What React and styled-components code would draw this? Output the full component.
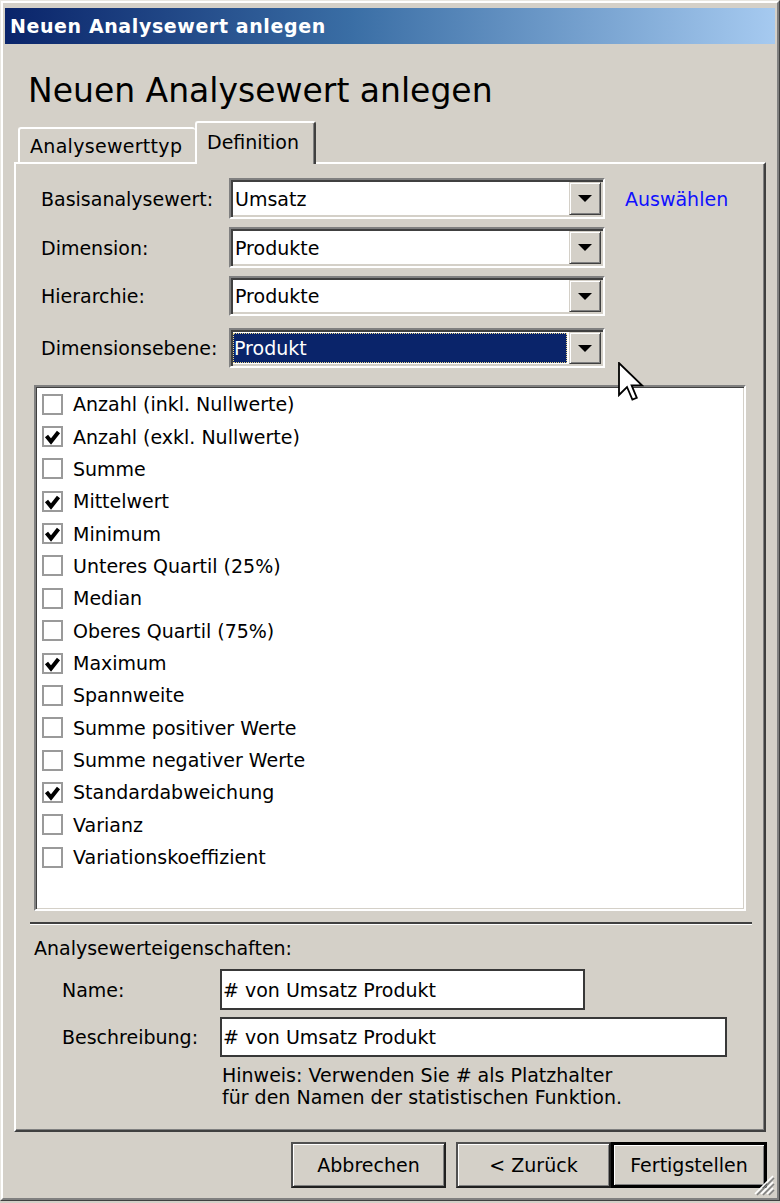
import React from "react";
import styled, { createGlobalStyle } from "styled-components";

const GlobalStyle = createGlobalStyle`
  html, body { margin: 0; padding: 0; background: #d4d0c8; }
  body {
    font-family: "DejaVu Sans", Verdana, sans-serif;
    font-size: 19px;
    color: #000;
  }
  * { box-sizing: border-box; }
`;

const Outer = styled.div`
  position: relative;
  width: 780px;
  height: 1201px;
  border: 1px solid;
  border-color: #e8e6e0 #404040 #404040 #e8e6e0;
  background: #d4d0c8;
`;

const Inner = styled.div`
  position: relative;
  height: 100%;
  border: 2px solid;
  border-color: #fff #808080 #808080 #fff;
  padding: 5px 2px 0 2px;
  display: flex;
  flex-direction: column;
`;

const TitleBar = styled.div`
  height: 36px;
  display: flex;
  align-items: center;
  padding-left: 5px;
  background: linear-gradient(to right, #0a246a 0%, #3a6ea5 45%, #a6caf0 100%);
  color: #fff;
  font-weight: bold;
  font-size: 19px;
  letter-spacing: 0.6px;
`;

const Header = styled.h1`
  margin: 30px 0 0 23px;
  font-size: 33px;
  line-height: 33px;
  font-weight: normal;
`;

const TabStrip = styled.div`
  position: relative;
  z-index: 1;
  margin-top: 14px;
  height: 41px;
  padding-left: 13px;
  display: flex;
  align-items: flex-end;
`;

const Tab = styled.div`
  display: flex;
  align-items: center;
  background: #d4d0c8;
  border-top: 2px solid #fff;
  border-left: 2px solid #fff;
  border-radius: 3px 3px 0 0;
  ${(p) =>
    p.$active
      ? `
    width: 121px;
    height: 43px;
    margin-bottom: -2px;
    padding: 0 0 4px 10px;
    border-right: 2px solid #404040;
    box-shadow: inset -1px 0 0 #808080;
  `
      : `
    width: 177px;
    height: 35px;
    padding: 0 0 0 10px;
    letter-spacing: 0.3px;
  `}
`;

const Panel = styled.div`
  margin: 0 9px;
  height: 970px;
  border: 2px solid;
  border-color: #fff #404040 #404040 #fff;
  box-shadow: inset -1px -1px 0 #808080;
  padding: 14px 18px 0 18px;
  display: flex;
  flex-direction: column;
`;

const FieldRow = styled.div`
  display: flex;
  align-items: center;
  height: ${(p) => p.$h || 41}px;
  margin-top: ${(p) => p.$gap || 0}px;
  padding-left: 7px;
`;

const FieldLabel = styled.div`
  width: 188px;
`;

const Combo = styled.div`
  width: 376px;
  height: 100%;
  display: flex;
  border: 2px solid;
  border-color: #808080 #fff #fff #808080;
  box-shadow: inset 2px 2px 0 #404040, inset -2px -2px 0 #d4d0c8;
  padding: 2px;
  background: #fff;
`;

const ComboValue = styled.div`
  flex: 1;
  display: flex;
  align-items: center;
  padding-left: 2px;
  ${(p) =>
    p.$selected &&
    `
    margin: 1px 2px 1px 0;
    padding-left: 1px;
    background: #0a246a;
    color: #fff;
    outline: 1px dotted #e6d38a;
    outline-offset: -1px;
  `}
`;

const ComboButton = styled.div`
  width: 32px;
  height: 100%;
  display: flex;
  align-items: center;
  justify-content: center;
  background: #d4d0c8;
  border: 1px solid;
  border-color: #d4d0c8 #404040 #404040 #d4d0c8;
  box-shadow: inset 1px 1px 0 #fff, inset -1px -1px 0 #808080;
`;

const Arrow = styled.div`
  width: 0;
  height: 0;
  border-left: 7px solid transparent;
  border-right: 7px solid transparent;
  border-top: 7px solid #000;
`;

const Link = styled.div`
  margin-left: 20px;
  color: #1010ff;
`;

const ListBox = styled.div`
  margin: 17px 0 0 0;
  width: 712px;
  height: 526px;
  border: 2px solid;
  border-color: #808080 #fff #fff #808080;
  box-shadow: inset 1px 1px 0 #404040, inset -1px -1px 0 #d4d0c8;
  background: #fff;
  padding: 1px 0 0 6px;
`;

const ListItem = styled.div`
  height: 32.36px;
  display: flex;
  align-items: center;
`;

const CheckBox = styled.div`
  width: 21px;
  height: 21px;
  border: 2px solid #9a9a9a;
  background: #fff;
  display: flex;
`;

const ItemText = styled.span`
  margin-left: 10px;
`;

const Separator = styled.div`
  margin: 11px 0 0 -4px;
  width: 722px;
  border-top: 2px solid #404040;
  border-bottom: 1px solid #fff;
`;

const SectionLabel = styled.div`
  margin-top: 12px;
  line-height: 22px;
`;

const PropRow = styled.div`
  display: flex;
  align-items: center;
  margin-top: ${(p) => p.$gap}px;
  padding-left: 28px;
`;

const PropLabel = styled.div`
  width: 158px;
`;

const TextBox = styled.div`
  width: ${(p) => p.$w}px;
  height: ${(p) => p.$h}px;
  border: 2px solid #383838;
  background: #fff;
  display: flex;
  align-items: center;
  padding-left: 1px;
`;

const Hint = styled.div`
  margin: 7px 0 0 188px;
  line-height: 22px;
`;

const ButtonRow = styled.div`
  margin-top: 10px;
  height: 46px;
  display: flex;
  justify-content: flex-end;
  padding-right: 8px;
`;

const Button = styled.div`
  width: ${(p) => p.$w}px;
  height: 100%;
  margin-right: ${(p) => p.$mr || 0}px;
  display: flex;
  align-items: center;
  justify-content: center;
  background: #d4d0c8;
  ${(p) =>
    p.$default
      ? `
    border: 3px solid #000;
    box-shadow: inset 1px 1px 0 #fff, inset -1px -1px 0 #808080;
  `
      : `
    border: 2px solid;
    border-color: #505050 #202020 #202020 #505050;
    box-shadow: inset 1px 1px 0 #fff, inset -1px -1px 0 #808080;
  `}
`;

const Grip = styled.svg`
  position: absolute;
  right: 2px;
  bottom: 2px;
`;

const Cursor = styled.svg`
  position: absolute;
  left: 617px;
  top: 361px;
  z-index: 5;
`;

const items = [
  ["Anzahl (inkl. Nullwerte)", false],
  ["Anzahl (exkl. Nullwerte)", true],
  ["Summe", false],
  ["Mittelwert", true],
  ["Minimum", true],
  ["Unteres Quartil (25%)", false],
  ["Median", false],
  ["Oberes Quartil (75%)", false],
  ["Maximum", true],
  ["Spannweite", false],
  ["Summe positiver Werte", false],
  ["Summe negativer Werte", false],
  ["Standardabweichung", true],
  ["Varianz", false],
  ["Variationskoeffizient", false],
];

const Check = () => (
  <svg width="17" height="17" viewBox="0 0 17 17">
    <path d="M2.5 8 L7 13.5 L14.5 4" fill="none" stroke="#000" strokeWidth="4" />
  </svg>
);

const ComboBox = ({ value, selected }) => (
  <Combo>
    <ComboValue $selected={selected}>{value}</ComboValue>
    <ComboButton>
      <Arrow />
    </ComboButton>
  </Combo>
);

export default function App() {
  return (
    <>
      <GlobalStyle />
      <Outer>
        <Inner>
          <TitleBar>Neuen Analysewert anlegen</TitleBar>
          <Header>Neuen Analysewert anlegen</Header>
          <TabStrip>
            <Tab>Analysewerttyp</Tab>
            <Tab $active>Definition</Tab>
          </TabStrip>
          <Panel>
            <FieldRow>
              <FieldLabel>Basisanalysewert:</FieldLabel>
              <ComboBox value="Umsatz" />
              <Link>Auswählen</Link>
            </FieldRow>
            <FieldRow $gap={8}>
              <FieldLabel>Dimension:</FieldLabel>
              <ComboBox value="Produkte" />
            </FieldRow>
            <FieldRow $gap={8} $h={40}>
              <FieldLabel>Hierarchie:</FieldLabel>
              <ComboBox value="Produkte" />
            </FieldRow>
            <FieldRow $gap={12} $h={40}>
              <FieldLabel>Dimensionsebene:</FieldLabel>
              <ComboBox value="Produkt" selected />
            </FieldRow>
            <ListBox>
              {items.map(([label, checked]) => (
                <ListItem key={label}>
                  <CheckBox>{checked && <Check />}</CheckBox>
                  <ItemText>{label}</ItemText>
                </ListItem>
              ))}
            </ListBox>
            <Separator />
            <SectionLabel>Analysewerteigenschaften:</SectionLabel>
            <PropRow $gap={10}>
              <PropLabel>Name:</PropLabel>
              <TextBox $w={365} $h={41}># von Umsatz Produkt</TextBox>
            </PropRow>
            <PropRow $gap={7}>
              <PropLabel>Beschreibung:</PropLabel>
              <TextBox $w={507} $h={40}># von Umsatz Produkt</TextBox>
            </PropRow>
            <Hint>
              Hinweis: Verwenden Sie # als Platzhalter
              <br />
              für den Namen der statistischen Funktion.
            </Hint>
          </Panel>
          <ButtonRow>
            <Button $w={155} $mr={10}>Abbrechen</Button>
            <Button $w={155}>&lt; Zurück</Button>
            <Button $w={156} $default>Fertigstellen</Button>
          </ButtonRow>
          <Grip width="26" height="26" viewBox="0 0 26 26">
            <g strokeWidth="1.6">
              <line x1="24" y1="6" x2="6" y2="24" stroke="#fff" />
              <line x1="25" y1="8" x2="8" y2="25" stroke="#808080" />
              <line x1="24" y1="12" x2="12" y2="24" stroke="#fff" />
              <line x1="25" y1="14" x2="14" y2="25" stroke="#808080" />
              <line x1="24" y1="18" x2="18" y2="24" stroke="#fff" />
              <line x1="25" y1="20" x2="20" y2="25" stroke="#808080" />
            </g>
          </Grip>
        </Inner>
        <Cursor width="26" height="40" viewBox="0 0 13 20">
          <path
            d="M0.5 0.5 L0.5 16.5 L4.5 12.5 L7.2 18.8 L9.4 17.9 L6.8 11.7 L12 11.7 Z"
            fill="#fff"
            stroke="#000"
            strokeWidth="0.9"
            strokeLinejoin="miter"
          />
        </Cursor>
      </Outer>
    </>
  );
}
